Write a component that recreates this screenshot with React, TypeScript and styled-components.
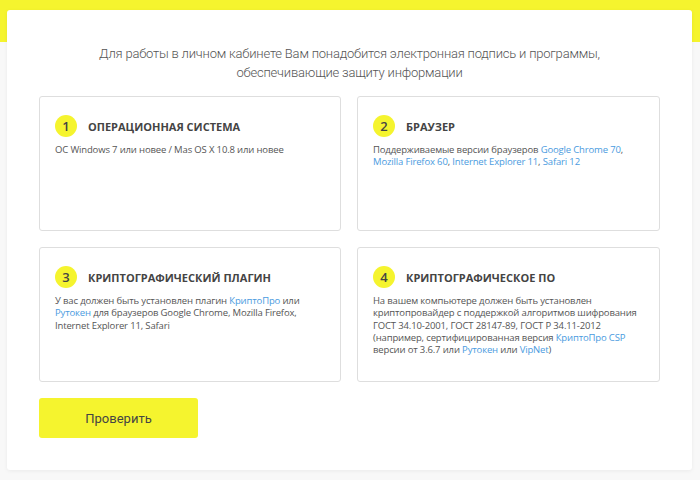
import React from "react";
import styled, { createGlobalStyle } from "styled-components";

const GlobalStyle = createGlobalStyle`
  html, body {
    margin: 0;
    padding: 0;
    background: #f8f8f8;
    font-family: "Open Sans", "Liberation Sans", sans-serif;
  }
`;

const Page = styled.div`
  width: 700px;
  height: 480px;
  background: linear-gradient(#f5f42e 0, #f5f42e 42px, #f8f8f8 42px);
  padding: 10px 8px 10px 7px;
  box-sizing: border-box;
`;

const Card = styled.div`
  background: #fff;
  border-radius: 3px;
  box-shadow: 0 1px 4px rgba(0, 0, 0, 0.06);
  height: 460px;
  box-sizing: border-box;
  padding: 34px 32px 0 32px;
`;

const Intro = styled.p`
  margin: 0 0 14px;
  text-align: center;
  font-family: Roboto, "Open Sans", sans-serif;
  font-weight: 300;
  font-size: 13px;
  letter-spacing: -0.2px;
  line-height: 19px;
  color: #555;
`;

const Grid = styled.div`
  display: grid;
  grid-template-columns: 302px 303px;
  grid-auto-rows: 135px;
  column-gap: 16px;
  row-gap: 16px;
`;

const Step = styled.div`
  border: 1px solid #dedede;
  border-radius: 3px;
  padding: 18px 15px;
  box-sizing: border-box;
`;

const StepHead = styled.div`
  display: flex;
  align-items: center;
  gap: 11px;
  margin-bottom: 7px;
`;

const Badge = styled.span`
  width: 22px;
  height: 22px;
  border-radius: 50%;
  background: #f5f42e;
  display: flex;
  align-items: center;
  justify-content: center;
  font-size: 13px;
  font-weight: 600;
  color: #444;
`;

const StepTitle = styled.h3`
  margin: 0;
  font-size: 11px;
  font-weight: 700;
  color: #444;
  text-transform: uppercase;
`;

const StepText = styled.p`
  margin: 0;
  font-size: 9.5px;
  letter-spacing: -0.15px;
  line-height: 12.3px;
  color: #555;
`;

const Link = styled.a`
  color: #4a9be0;
  text-decoration: none;
`;

const CheckButton = styled.button`
  margin-top: 16px;
  width: 159px;
  height: 40px;
  border: none;
  border-radius: 3px;
  background: #f5f42e;
  font-family: Roboto, "Open Sans", sans-serif;
  font-size: 13px;
  color: #444;
  cursor: pointer;
`;

const steps = [
  {
    n: 1,
    title: "Операционная система",
    body: <>ОС Windows 7 или новее / Mas OS X 10.8 или новее</>,
  },
  {
    n: 2,
    title: "Браузер",
    body: (
      <>
        Поддерживаемые версии браузеров <Link href="#">Google Chrome 70</Link>,{" "}
        <Link href="#">Mozilla Firefox 60</Link>, <Link href="#">Internet Explorer 11</Link>,{" "}
        <Link href="#">Safari 12</Link>
      </>
    ),
  },
  {
    n: 3,
    title: "Криптографический плагин",
    body: (
      <>
        У вас должен быть установлен плагин <Link href="#">КриптоПро</Link> или{" "}
        <Link href="#">Рутокен</Link> для браузеров Google Chrome, Mozilla Firefox,
        Internet Explorer 11, Safari
      </>
    ),
  },
  {
    n: 4,
    title: "Криптографическое ПО",
    body: (
      <>
        На вашем компьютере должен быть установлен криптопровайдер с поддержкой
        алгоритмов шифрования ГОСТ 34.10-2001, ГОСТ 28147-89, ГОСТ Р 34.11-2012
        (например, сертифицированная версия <Link href="#">КриптоПро CSP</Link>{" "}
        версии от 3.6.7 или <Link href="#">Рутокен</Link> или <Link href="#">VipNet</Link>)
      </>
    ),
  },
];

const App: React.FC = () => {
  return (
    <>
      <GlobalStyle />
      <Page>
        <Card>
          <Intro>
            Для работы в личном кабинете Вам понадобится электронная подпись и программы,
            <br />
            обеспечивающие защиту информации
          </Intro>
          <Grid>
            {steps.map((s) => (
              <Step key={s.n}>
                <StepHead>
                  <Badge>{s.n}</Badge>
                  <StepTitle>{s.title}</StepTitle>
                </StepHead>
                <StepText>{s.body}</StepText>
              </Step>
            ))}
          </Grid>
          <CheckButton>Проверить</CheckButton>
        </Card>
      </Page>
    </>
  );
};

export default App;
